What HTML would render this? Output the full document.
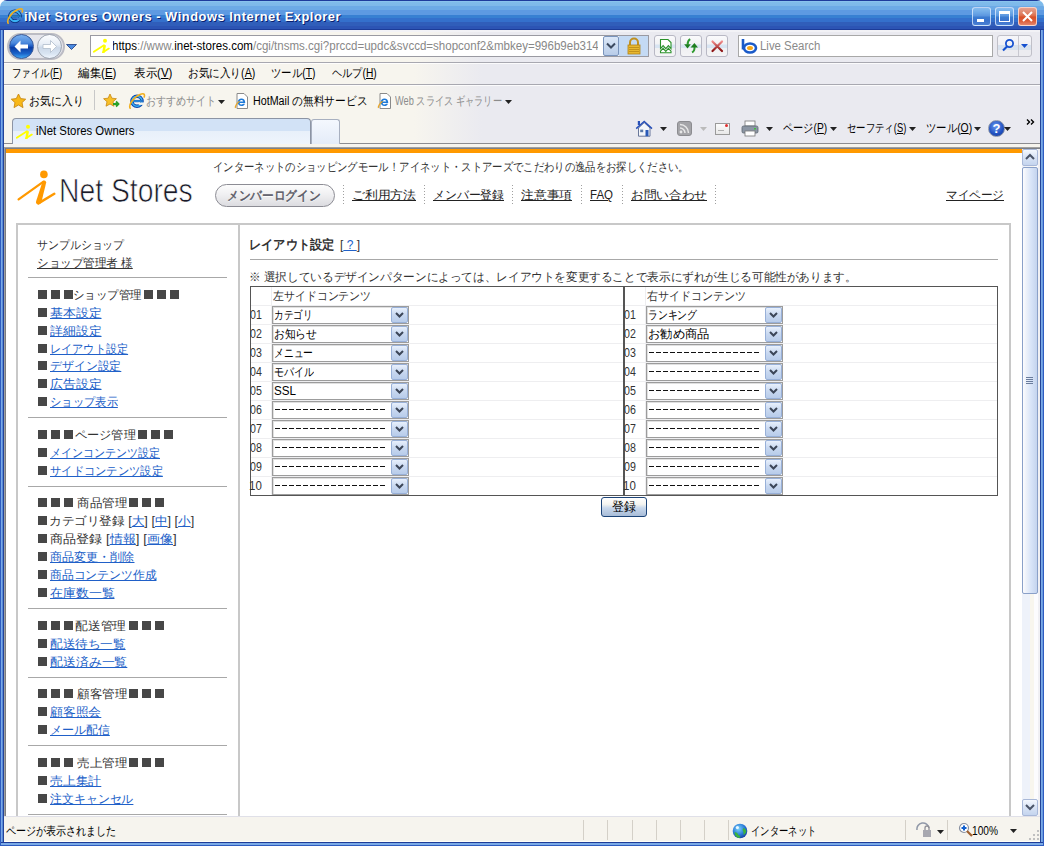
<!DOCTYPE html>
<html><head><meta charset="utf-8"><title>iNet Stores Owners</title>
<style>
*{margin:0;padding:0;box-sizing:border-box}
html,body{width:1044px;height:846px;overflow:hidden;background:#fff;font-family:"Liberation Sans",sans-serif;font-size:12px;color:#000}
.a{position:absolute}
.t{position:absolute;white-space:nowrap;line-height:14px;font-size:12px;transform-origin:0 0}
.u{text-decoration:underline}
</style></head><body>
<div class="a" style="left:0px;top:20px;width:1044px;height:826px;background:#2E5CC0;"></div>
<div class="a" style="left:1px;top:28px;width:3px;height:817px;background:linear-gradient(90deg,#7AAAE6 0,#7AAAE6 1px,#5888D8 1px,#5888D8 2px,#224498 2px);"></div>
<div class="a" style="left:1040px;top:28px;width:3px;height:817px;background:linear-gradient(90deg,#224498 0,#224498 1px,#7AAAE6 1px,#7AAAE6 2px,#6A9AE0 2px);"></div>
<div class="a" style="left:1px;top:842px;width:1042px;height:3px;background:linear-gradient(180deg,#1E3C98 0,#1E3C98 1px,#7AAAE6 1px);"></div>
<div class="a" style="left:0px;top:0px;width:1044px;height:30px;background:linear-gradient(180deg,#1E3C9C 0,#1E3C9C 1px,#92CAF2 1px,#80BCEA 2px,#7EB8EA 6px,#6CAAE6 6px,#6CAAE6 10px,#5E9AE2 10px,#5E9AE2 15px,#3880D2 15px,#3880D2 18px,#3470CC 18px,#3470CC 22px,#305EBA 22px,#305EBA 26px,#2C54B4 26px,#2C54B4 29px,#1C3C98 29px);border-radius:7px 7px 0 0"></div>
<svg class="a" style="left:6px;top:7px" width="18" height="18" viewBox="-1 -1 18 18">
 <circle cx="8" cy="8.2" r="5" fill="none" stroke="#082A74" stroke-width="3.6"/>
 <circle cx="8" cy="8.2" r="5" fill="none" stroke="#3AB2F4" stroke-width="2.2"/>
 <rect x="2.6" y="6.9" width="10.8" height="2.3" fill="#082A74"/><rect x="3.2" y="7.5" width="9.6" height="1.1" fill="#3AB2F4"/>
 <rect x="9.6" y="9.5" width="5.6" height="2.4" fill="#3A7CD0"/>
 <path d="M1.2 15.2C-.6 12.6 3.6 4.4 11 1.4c3.4-1.4 5.2-.6 4.2 2.6" fill="none" stroke="#F0B020" stroke-width="1.6" stroke-linecap="round"/>
</svg>
<div class="t f" id="t0" style="left:25.01px;top:11px;font-size:13px;color:#0A1E6E;font-weight:bold;letter-spacing:0.5px;--w:317.056px;transform:scaleX(0.99371);">iNet Stores Owners - Windows Internet Explorer</div>
<div class="t f" id="t1" style="left:24.01px;top:10px;font-size:13px;color:#fff;font-weight:bold;letter-spacing:0.5px;--w:317.056px;transform:scaleX(0.99371);">iNet Stores Owners - Windows Internet Explorer</div>
<div class="a" style="left:972px;top:7px;width:19px;height:19px;border:1px solid rgba(230,240,255,.75);border-radius:3px;background:linear-gradient(180deg,#86BCEE 0,#6AA6E6 30%,#5A94DE 48%,#3C7ED2 52%,#3A72CC 75%,#4A80D4 100%)"><div class="a" style="left:4px;top:11px;width:7px;height:3px;background:#fff"></div></div>
<div class="a" style="left:995px;top:7px;width:19px;height:19px;border:1px solid rgba(230,240,255,.75);border-radius:3px;background:linear-gradient(180deg,#86BCEE 0,#6AA6E6 30%,#5A94DE 48%,#3C7ED2 52%,#3A72CC 75%,#4A80D4 100%)"><div class="a" style="left:3px;top:3px;width:11px;height:11px;border:1px solid #fff;border-top-width:3px"></div></div>
<div class="a" style="left:1018px;top:7px;width:19px;height:19px;border:1px solid rgba(255,230,220,.8);border-radius:3px;background:linear-gradient(180deg,#E4A090 0,#E08468 30%,#DC6A48 48%,#D85028 52%,#DC5C38 75%,#E4846C 100%)"><svg class="a" style="left:2px;top:2px" width="13" height="13" viewBox="0 0 13 13"><path d="M2 2L11 11M11 2L2 11" stroke="#fff" stroke-width="2"/></svg></div>
<div class="a" style="left:4px;top:30px;width:1036px;height:117px;background:linear-gradient(90deg,#F7F5EE 0,#F7F5EE 410px,#EAEAF0 478px,#EAEAF0 100%);"></div>
<div class="a" style="left:4px;top:30px;width:1036px;height:2px;background:#F2F2F6;"></div>
<div class="a" style="left:7px;top:33px;width:58px;height:27px;border-radius:14px;background:#E6E6EC;border:2px solid #BCBCC4"></div>
<div class="a" style="left:9px;top:34px;width:25px;height:25px;border-radius:50%;background:linear-gradient(180deg,#7AB0EE 0,#4A88DC 35%,#1E5CC4 48%,#0A3CA4 55%,#1A62C8 80%,#40A8F4 100%);border:1px solid #3A5A98"></div>
<svg class="a" style="left:13px;top:39px" width="17" height="15" viewBox="0 0 17 15"><path d="M1.5 7.5L7.5 1.5v4H15v4H7.5v4z" fill="#fff"/></svg>
<div class="a" style="left:37px;top:34px;width:25px;height:25px;border-radius:50%;background:linear-gradient(180deg,#FCFDFF 0,#E8EEF6 40%,#CCD8E8 55%,#D8E4F2 80%,#F0F6FE 100%);border:1px solid #9CA4B0"></div>
<svg class="a" style="left:41px;top:39px" width="17" height="15" viewBox="0 0 17 15"><path d="M15.5 7.5L9.5 1.5v4H2v4h7.5v4z" fill="#fff" stroke="#B0BCCC" stroke-width=".8"/></svg>
<svg class="a" style="left:66px;top:44px" width="11" height="6" viewBox="0 0 11 6"><path d="M.5 .5h10L5.5 5.5z" fill="#4A8AE0" stroke="#1A3A80" stroke-width=".8"/></svg>
<div class="a" style="left:90px;top:35px;width:559px;height:22px;background:#fff;border:1px solid #9A9AA2"></div>
<svg class="a" style="left:93px;top:37px" width="18" height="16" viewBox="0 0 18 16"><circle cx="12" cy="3.7" r="2" fill="#FFFF00"/><path d="M0.8 14.8L11 8.2" stroke="#FFFF00" stroke-width="1.8" stroke-linecap="round"/><path d="M10.4 8.2h2.6L11.6 15.8H9.2z" fill="#FFFF00"/><path d="M10 15.3L15.8 11.6" stroke="#FFFF00" stroke-width="1.8" stroke-linecap="round"/></svg>
<div class="a" style="left:113px;top:36px;width:485px;height:20px;overflow:hidden">
<div class="t f" id="t2" style="left:-0.96px;top:3px;font-size:12px;color:#888;--w:492.546px;transform:scaleX(0.96086);"><span style="color:#000">https</span>://www.<span style="color:#000">inet-stores.com</span>/cgi/tnsms.cgi?prccd=updc&amp;svccd=shopconf2&amp;mbkey=996b9eb314c</div>
</div>
<div class="a" style="left:603px;top:36px;width:16px;height:20px;border:1px solid #7A94BC;border-radius:2px;background:linear-gradient(180deg,#DCE8F8,#B8CCE8)"></div>
<svg class="a" style="left:606px;top:42px" width="10" height="8" viewBox="0 0 10 8"><path d="M1 1.5L5 5.5 9 1.5" fill="none" stroke="#3C4A60" stroke-width="2"/></svg>
<div class="a" style="left:619px;top:36px;width:29px;height:20px;background:#C4DAF4;"></div>
<svg class="a" style="left:626px;top:37px" width="16" height="18" viewBox="0 0 16 18"><path d="M4 8V5.5a4 4 0 0 1 8 0V8" fill="none" stroke="#C09020" stroke-width="2"/><rect x="2" y="8" width="12" height="9" fill="#E8B830" stroke="#B08018" stroke-width=".8"/><path d="M3 10.5h10M3 12.5h10M3 14.5h10" stroke="#B88818" stroke-width=".8"/></svg>
<div class="a" style="left:654px;top:35px;width:22px;height:22px;border:1px solid #B8B8C4;border-radius:3px;background:linear-gradient(180deg,#FAFAFC 0,#F2F2F4 40%,#D8E4F2 45%,#D8E4F2 58%,#F0F0F2 62%,#F4F4F6 100%)"></div>
<div class="a" style="left:680px;top:35px;width:22px;height:22px;border:1px solid #B8B8C4;border-radius:3px;background:linear-gradient(180deg,#FAFAFC 0,#F2F2F4 40%,#D8E4F2 45%,#D8E4F2 58%,#F0F0F2 62%,#F4F4F6 100%)"></div>
<div class="a" style="left:706px;top:35px;width:22px;height:22px;border:1px solid #B8B8C4;border-radius:3px;background:linear-gradient(180deg,#FAFAFC 0,#F2F2F4 40%,#D8E4F2 45%,#D8E4F2 58%,#F0F0F2 62%,#F4F4F6 100%)"></div>
<svg class="a" style="left:652px;top:34px" width="78" height="24" viewBox="652 34 78 24"><path d="M660.5 39.5h7.5l3 3v6L668.4 45.6 665.8 48.6 663.1 45.6 660.5 48.5z" fill="#fff" stroke="#2A922A" stroke-width="1.1"/><path d="M660.5 51.2L663.1 48.3 665.8 51.3 668.4 48.3 671 51.2v1.6h-10.5z" fill="#fff" stroke="#2A922A" stroke-width="1.1"/><path d="M690.2 39.2c-1.6.8-2.6 2.4-2.6 5.6" fill="none" stroke="#2E9A2E" stroke-width="2"/><path d="M684.2 44.2h6.6l-3.3 4.2z" fill="#1E7E1E"/><path d="M692 52.4c1.8-.8 2.7-2.6 2.5-5.8" fill="none" stroke="#2E9A2E" stroke-width="2"/><path d="M690.6 47.4h7.4l-3.6-4.4z" fill="#1E7E1E"/><defs><linearGradient id="xg" x1="0" y1="0" x2="0" y2="1"><stop offset="0" stop-color="#F08A8A"/><stop offset="1" stop-color="#8A1010"/></linearGradient></defs><path d="M712.5 41.5l9.5 9.5M722 41.5l-9.5 9.5" stroke="url(#xg)" stroke-width="2.2" stroke-linecap="round"/></svg>
<div class="a" style="left:738px;top:35px;width:255px;height:22px;background:#fff;border:1px solid #A8A8A8"></div>
<svg class="a" style="left:741px;top:38px" width="17" height="16" viewBox="0 0 17 16"><path d="M2 1v10.5" stroke="#1A5AC8" stroke-width="2.6"/><ellipse cx="9" cy="10" rx="6" ry="4.5" fill="none" stroke="#1A5AC8" stroke-width="2.6"/><ellipse cx="9" cy="10" rx="3" ry="2" fill="#F8A818"/></svg>
<div class="t f" id="t3" style="left:760.05px;top:39px;font-size:12px;color:#8A8A8A;--w:60.308px;transform:scaleX(0.95161);">Live Search</div>
<div class="a" style="left:997px;top:35px;width:35px;height:22px;border:1px solid #C0C0C8;border-radius:3px;background:linear-gradient(180deg,#F6F6FA 0,#F0F0F4 45%,#D8E2EE 45%,#D8E2EE 70%,#ECECF0 70%)"></div>
<div class="a" style="left:1018px;top:36px;width:1px;height:20px;background:#C8C8D0;"></div>
<svg class="a" style="left:1001px;top:38px" width="14" height="15" viewBox="0 0 14 15"><circle cx="8.5" cy="5.5" r="3.6" fill="none" stroke="#1450D0" stroke-width="1.8"/><path d="M6 8.5L2 12.5" stroke="#1450D0" stroke-width="2.2"/></svg>
<svg class="a" style="left:1021px;top:44px" width="7" height="4" viewBox="0 0 7 4"><path d="M0 0h7L3.5 4z" fill="#1450D0"/></svg>
<div class="a" style="left:4px;top:62px;width:1036px;height:1px;background:#A8A8B0;"></div>
<div class="a" style="left:4px;top:63px;width:1036px;height:1px;background:rgba(255,255,255,.8);"></div>
<div class="t f" id="t4" style="left:12.21px;top:66px;font-size:12px;color:#000;--w:50.062px;transform:scaleX(0.79032);">ファイル(<span class="u">F</span>)</div>
<div class="t f" id="t5" style="left:78.00px;top:66px;font-size:12px;color:#000;--w:38.415px;transform:scaleX(0.96000);">編集(<span class="u">E</span>)</div>
<div class="t f" id="t6" style="left:134.00px;top:66px;font-size:12px;color:#000;--w:38.415px;transform:scaleX(0.96000);">表示(<span class="u">V</span>)</div>
<div class="t f" id="t7" style="left:188.11px;top:66px;font-size:12px;color:#000;--w:67.299px;transform:scaleX(0.88533);">お気に入り(<span class="u">A</span>)</div>
<div class="t f" id="t8" style="left:271.13px;top:66px;font-size:12px;color:#000;--w:44.464px;transform:scaleX(0.86600);">ツール(<span class="u">T</span>)</div>
<div class="t f" id="t9" style="left:332.00px;top:66px;font-size:12px;color:#000;--w:44.771px;transform:scaleX(0.85000);">ヘルプ(<span class="u">H</span>)</div>
<div class="a" style="left:4px;top:84px;width:1036px;height:1px;background:#A8A8B0;"></div>
<div class="a" style="left:4px;top:85px;width:1036px;height:1px;background:rgba(255,255,255,.8);"></div>
<svg class="a" style="left:10px;top:93px" width="17" height="16" viewBox="0 0 17 16"><path d="M8.5 1l2.2 4.6 5 .6-3.7 3.4 1 5L8.5 12 4 14.6l1-5L1.3 6.2l5-.6z" fill="#F8B818" stroke="#C88810" stroke-width=".9"/></svg>
<div class="t f" id="t10" style="left:29.09px;top:94px;font-size:12px;color:#000;--w:54.643px;transform:scaleX(0.91071);">お気に入り</div>
<div class="a" style="left:94px;top:90px;width:1px;height:20px;background:#C8C8C8;"></div>
<svg class="a" style="left:103px;top:93px" width="18" height="16" viewBox="0 0 18 16"><path d="M7 1l1.9 4.2 4.5.5-3.4 3 1 4.5L7 11 3 13.2l1-4.5-3.4-3 4.5-.5z" fill="#F8C028" stroke="#C88810" stroke-width=".8"/><path d="M10 11h5M13 8.5l2.5 2.5L13 13.5" fill="none" stroke="#2AA02A" stroke-width="1.8"/></svg>
<svg class="a" style="left:128px;top:92px" width="18" height="18" viewBox="-1 -1 18 18">
 <circle cx="8" cy="8.2" r="5" fill="none" stroke="#0E46AC" stroke-width="3.6"/>
 <circle cx="8" cy="8.2" r="5" fill="none" stroke="#3AB2F4" stroke-width="1.6"/>
 <rect x="2.6" y="6.9" width="10.8" height="2.3" fill="#0E46AC"/><rect x="3.2" y="7.5" width="9.6" height="1.1" fill="#3AB2F4"/>
 <rect x="9.6" y="9.5" width="5.6" height="2.4" fill="#F7F5EE"/>
 <path d="M1.2 15.2C-.6 12.6 3.6 4.4 11 1.4c3.4-1.4 5.2-.6 4.2 2.6" fill="none" stroke="#F0B020" stroke-width="1.6" stroke-linecap="round"/>
</svg>
<div class="t f" id="t11" style="left:146.16px;top:94px;font-size:12px;color:#8C8C8C;--w:70.350px;transform:scaleX(0.83750);">おすすめサイト</div>
<svg class="a" style="left:218px;top:100px" width="7" height="4" viewBox="0 0 7 4"><path d="M0 0h7L3.5 4z" fill="#222"/></svg>
<svg class="a" style="left:233px;top:92px" width="17" height="18" viewBox="0 0 17 18"><path d="M4 1.5h7l3.5 3.5v11.5H4z" fill="#fff" stroke="#8A8A8A"/><path d="M8.5 6.5c-2.2 0-3.8 1.7-3.8 3.8s1.6 3.8 3.8 3.8c1.6 0 2.9-.9 3.5-2.3h-2c-.3.5-.8.7-1.4.7-1 0-1.8-.6-1.9-1.6h5.5v-.6c0-2.1-1.6-3.8-3.7-3.8zM6.7 9.6c.2-.9.9-1.5 1.8-1.5s1.6.6 1.8 1.5z" fill="#1E7AD8"/><path d="M2.5 16c-.8-1.2.9-4.3 4-6.7" fill="none" stroke="#E8A628" stroke-width="1.2"/></svg>
<div class="t f" id="t12" style="left:253.11px;top:94px;font-size:12px;color:#000;--w:114.300px;transform:scaleX(0.89286);">HotMail の無料サービス</div>
<svg class="a" style="left:376px;top:92px" width="17" height="18" viewBox="0 0 17 18"><path d="M4 1.5h7l3.5 3.5v11.5H4z" fill="#fff" stroke="#8A8A8A"/><path d="M8.5 6.5c-2.2 0-3.8 1.7-3.8 3.8s1.6 3.8 3.8 3.8c1.6 0 2.9-.9 3.5-2.3h-2c-.3.5-.8.7-1.4.7-1 0-1.8-.6-1.9-1.6h5.5v-.6c0-2.1-1.6-3.8-3.7-3.8zM6.7 9.6c.2-.9.9-1.5 1.8-1.5s1.6.6 1.8 1.5z" fill="#1E7AD8"/><path d="M2.5 16c-.8-1.2.9-4.3 4-6.7" fill="none" stroke="#E8A628" stroke-width="1.2"/></svg>
<div class="t f" id="t13" style="left:395.00px;top:94px;font-size:12px;color:#8C8C8C;--w:106.864px;transform:scaleX(0.76812);">Web スライス ギャラリー</div>
<svg class="a" style="left:505px;top:100px" width="7" height="4" viewBox="0 0 7 4"><path d="M0 0h7L3.5 4z" fill="#222"/></svg>
<div class="a" style="left:4px;top:143px;width:1036px;height:1px;background:#8C8C90;"></div>
<div class="a" style="left:12px;top:118px;width:299px;height:26px;border:1px solid #8C94A4;border-bottom:none;border-radius:4px 4px 0 0;background:linear-gradient(180deg,#D2E2F6 0,#D2E2F6 50%,#E8F0FA 50%,#EEF4FC)"></div>
<svg class="a" style="left:16px;top:123px" width="18" height="16" viewBox="0 0 18 16"><circle cx="12" cy="3.7" r="2" fill="#FFFF00"/><path d="M0.8 14.8L11 8.2" stroke="#FFFF00" stroke-width="1.8" stroke-linecap="round"/><path d="M10.4 8.2h2.6L11.6 15.8H9.2z" fill="#FFFF00"/><path d="M10 15.3L15.8 11.6" stroke="#FFFF00" stroke-width="1.8" stroke-linecap="round"/></svg>
<div class="t f" id="t14" style="left:36.00px;top:124px;font-size:12px;color:#000;--w:98.544px;transform:scaleX(0.94712);">iNet Stores Owners</div>
<div class="a" style="left:311px;top:119px;width:29px;height:25px;border:1px solid #A8B0C0;border-bottom:none;border-radius:3px 3px 0 0;background:linear-gradient(180deg,#F4F8FE,#E4ECF8)"></div>
<svg class="a" style="left:635px;top:120px" width="18" height="17" viewBox="0 0 18 17"><path d="M3.5 8v8.2h11.5V8L9.2 2.6z" fill="#F4F6FA" stroke="#5A6A90" stroke-width=".9"/><path d="M1.2 8.6L9.2 1.4l7.8 7.2" fill="none" stroke="#2850B8" stroke-width="1.5"/><rect x="2.8" y="1" width="2.2" height="4" fill="#2850B8"/><rect x="10.5" y="10" width="3" height="6.2" fill="#2A5AB8"/><rect x="5.2" y="9.6" width="3" height="2.6" fill="#5A78A8"/></svg>
<svg class="a" style="left:660px;top:127px" width="7" height="4" viewBox="0 0 7 4"><path d="M0 0h7L3.5 4z" fill="#222"/></svg>
<div class="a" style="left:677px;top:121px;width:15px;height:15px;background:#A4A4A8;border-radius:3px;border:1px solid #8C8C90"></div>
<svg class="a" style="left:679px;top:123px" width="11" height="11" viewBox="0 0 11 11"><circle cx="2" cy="9" r="1.4" fill="#E8E8E8"/><path d="M1 5a5 5 0 0 1 5 5M1 1.5a8.5 8.5 0 0 1 8.5 8.5" fill="none" stroke="#E8E8E8" stroke-width="1.5"/></svg>
<svg class="a" style="left:700px;top:127px" width="7" height="4" viewBox="0 0 7 4"><path d="M0 0h7L3.5 4z" fill="#BBB"/></svg>
<div class="a" style="left:715px;top:123px;width:15px;height:12px;background:linear-gradient(180deg,#FCFCFC,#E8E8E8);border:1px solid #9A9A9A"></div>
<div class="a" style="left:718px;top:130px;width:6px;height:1px;background:#B0B0B0;"></div>
<div class="a" style="left:725px;top:124px;width:3px;height:3px;background:#E03030;border-radius:50%"></div>
<svg class="a" style="left:741px;top:120px" width="18" height="17" viewBox="0 0 18 17"><rect x="4" y="1" width="10" height="5" fill="#fff" stroke="#777" stroke-width=".8"/><rect x="1" y="6" width="16" height="7" rx="1.5" fill="#8C96A4" stroke="#5C6470" stroke-width=".8"/><rect x="4" y="11" width="10" height="5" fill="#fff" stroke="#777" stroke-width=".8"/><rect x="13" y="8" width="2" height="1.5" fill="#40C040"/></svg>
<svg class="a" style="left:766px;top:127px" width="7" height="4" viewBox="0 0 7 4"><path d="M0 0h7L3.5 4z" fill="#222"/></svg>
<div class="t f" id="t15" style="left:783.00px;top:121px;font-size:12px;color:#000;--w:44.213px;transform:scaleX(0.85000);">ページ(<span class="u">P</span>)</div>
<svg class="a" style="left:830px;top:127px" width="7" height="4" viewBox="0 0 7 4"><path d="M0 0h7L3.5 4z" fill="#222"/></svg>
<div class="t f" id="t16" style="left:847.22px;top:121px;font-size:12px;color:#000;--w:59.292px;transform:scaleX(0.78000);">セーフティ(<span class="u">S</span>)</div>
<svg class="a" style="left:909px;top:127px" width="7" height="4" viewBox="0 0 7 4"><path d="M0 0h7L3.5 4z" fill="#222"/></svg>
<div class="t f" id="t17" style="left:926.13px;top:121px;font-size:12px;color:#000;--w:46.163px;transform:scaleX(0.86538);">ツール(<span class="u">O</span>)</div>
<svg class="a" style="left:974px;top:127px" width="7" height="4" viewBox="0 0 7 4"><path d="M0 0h7L3.5 4z" fill="#222"/></svg>
<div class="a" style="left:988px;top:120px;width:17px;height:17px;border-radius:50%;background:radial-gradient(circle at 45% 35%,#6A9AF0 0,#2050C0 60%,#183A90);border:1px solid #8A94A8"></div>
<div class="a" style="left:988px;top:121px;width:17px;text-align:center;color:#fff;font-weight:bold;font-size:13px;line-height:15px">?</div>
<svg class="a" style="left:1004px;top:127px" width="7" height="4" viewBox="0 0 7 4"><path d="M0 0h7L3.5 4z" fill="#222"/></svg>
<svg class="a" style="left:1026px;top:119px" width="9" height="6" viewBox="0 0 9 6"><path d="M1 .5L3.5 3 1 5.5M5 .5L7.5 3 5 5.5" fill="none" stroke="#000" stroke-width="1.4"/></svg>
<div class="a" style="left:4px;top:144px;width:1036px;height:3px;background:#F6F4EE;"></div>
<div class="a" style="left:4px;top:147px;width:1036px;height:1px;background:#A0A0A0;"></div>
<div class="a" style="left:4px;top:147px;width:1px;height:669px;background:#A0A0A0;"></div>
<div class="a" style="left:5px;top:148px;width:1035px;height:1px;background:#7C8088;"></div>
<div class="a" style="left:5px;top:148px;width:1px;height:668px;background:#7C7C80;"></div>
<div class="a" style="left:4px;top:816px;width:1036px;height:26px;background:#F6F4EE;"></div>
<div class="a" style="left:4px;top:816px;width:1036px;height:1px;background:#E0E0E8;"></div>
<div class="a" style="left:4px;top:841px;width:1036px;height:1px;background:#FFFFF8;"></div>
<div class="t f" id="t18" style="left:6.00px;top:824px;font-size:12px;color:#000;--w:110.235px;transform:scaleX(0.83511);">ページが表示されました</div>
<div class="a" style="left:6px;top:149px;width:1034px;height:667px;background:#fff;"></div>
<div class="a" style="left:6px;top:149px;width:1016px;height:4px;background:#FF9900;"></div>
<div class="a" style="left:1022px;top:149px;width:18px;height:667px;background:linear-gradient(90deg,#EEF2FA 0,#EEF2FA 8px,#F8F6EE 8px,#F8F6EE 12px,#FCFCFE 12px);"></div>
<div class="a" style="left:1038px;top:149px;width:2px;height:667px;background:#F0F0F4;"></div>
<div class="a" style="left:1022px;top:149px;width:16px;height:17px;border:1px solid #A8B8D8;border-radius:2px;background:linear-gradient(180deg,#F4F8FE 0,#DCE6F6 40%,#C4D4EE 100%)"></div>
<svg class="a" style="left:1025px;top:153px" width="10" height="7" viewBox="0 0 10 7"><path d="M1 6L5 2l4 4" fill="none" stroke="#4A5468" stroke-width="2"/></svg>
<div class="a" style="left:1022px;top:167px;width:16px;height:427px;border:1px solid #8AA0C8;border-radius:2px;background:linear-gradient(90deg,#FCFCFE 0,#EEF2FA 3px,#D8E4F8 8px,#C4D4EE 14px)"></div>
<div class="a" style="left:1026px;top:377px;width:7px;height:7px;background:repeating-linear-gradient(180deg,#6A7C9C 0,#6A7C9C 1px,transparent 1px,transparent 2px);"></div>
<div class="a" style="left:1022px;top:799px;width:16px;height:17px;border:1px solid #A8B8D8;border-radius:2px;background:linear-gradient(180deg,#F4F8FE 0,#DCE6F6 40%,#C4D4EE 100%)"></div>
<svg class="a" style="left:1025px;top:804px" width="10" height="7" viewBox="0 0 10 7"><path d="M1 1l4 4 4-4" fill="none" stroke="#4A5468" stroke-width="2"/></svg>
<div class="t f" id="t19" style="left:213.14px;top:160px;font-size:12px;color:#333;--w:475.757px;transform:scaleX(0.86188);">インターネットのショッピングモール！アイネット・ストアーズでこだわりの逸品をお探しください。</div>
<svg class="a" style="left:14px;top:166px" width="48" height="44" viewBox="0 0 48 44"><circle cx="29.9" cy="8.4" r="3.8" fill="#FF9900"/><path d="M4.6 33.4L29.5 15.6" stroke="#FF9900" stroke-width="2.3" stroke-linecap="round"/><path d="M28.6 15.2Q31.6 13.4 32.2 16.4L27.4 36.2Q26.4 38.8 23.4 38.2Q21.4 37.6 22.2 35Z" fill="#FF9900"/><path d="M24.4 37.4L40.3 27.8" stroke="#FF9900" stroke-width="2.5" stroke-linecap="round"/></svg>
<div class="t f" id="t20" style="left:59.03px;top:173px;font-size:33px;color:#1A1A28;line-height:36px;-webkit-text-stroke:0.7px #fff;--w:133.751px;transform:scaleX(0.85789);">Net Stores</div>
<div class="a" style="left:215px;top:184px;width:120px;height:23px;border:1px solid #8C8C94;border-radius:12px;background:linear-gradient(180deg,#FCFCFC 0,#F0F0F2 45%,#DCDCE0 100%)"></div>
<div class="t f" id="t21" style="left:227.10px;top:189px;font-size:13px;color:#5A5A66;-webkit-text-stroke-width:0.5px;text-shadow:0 1px 0 #fff;--w:93.499px;transform:scaleX(0.89903);">メンバーログイン</div>
<div class="a" style="left:343px;top:185px;width:1px;height:21px;background:repeating-linear-gradient(180deg,#A0A0A0 0,#A0A0A0 1px,transparent 1px,transparent 3px);"></div>
<div class="a" style="left:424px;top:185px;width:1px;height:21px;background:repeating-linear-gradient(180deg,#A0A0A0 0,#A0A0A0 1px,transparent 1px,transparent 3px);"></div>
<div class="a" style="left:512px;top:185px;width:1px;height:21px;background:repeating-linear-gradient(180deg,#A0A0A0 0,#A0A0A0 1px,transparent 1px,transparent 3px);"></div>
<div class="a" style="left:581px;top:185px;width:1px;height:21px;background:repeating-linear-gradient(180deg,#A0A0A0 0,#A0A0A0 1px,transparent 1px,transparent 3px);"></div>
<div class="a" style="left:622px;top:185px;width:1px;height:21px;background:repeating-linear-gradient(180deg,#A0A0A0 0,#A0A0A0 1px,transparent 1px,transparent 3px);"></div>
<div class="a" style="left:715px;top:185px;width:1px;height:21px;background:repeating-linear-gradient(180deg,#A0A0A0 0,#A0A0A0 1px,transparent 1px,transparent 3px);"></div>
<div class="t f u" id="t22" style="left:352.00px;top:188px;font-size:12px;color:#222;--w:64.000px;transform:scaleX(1.06667);">ご利用方法</div>
<div class="t f u" id="t23" style="left:433.00px;top:188px;font-size:12px;color:#222;--w:71.000px;transform:scaleX(0.98611);">メンバー登録</div>
<div class="t f u" id="t24" style="left:521.00px;top:188px;font-size:12px;color:#222;--w:51.000px;transform:scaleX(1.06250);">注意事項</div>
<div class="t f u" id="t25" style="left:590.00px;top:188px;font-size:12px;color:#222;--w:23.015px;transform:scaleX(0.95833);">FAQ</div>
<div class="t f u" id="t26" style="left:631.00px;top:188px;font-size:12px;color:#222;--w:76.000px;transform:scaleX(1.05556);">お問い合わせ</div>
<div class="t f u" id="t27" style="left:946.00px;top:188px;font-size:12px;color:#222;--w:58.000px;transform:scaleX(0.96667);">マイページ</div>
<div class="a" style="left:16px;top:223px;width:995px;height:2px;background:#C8C8C8;"></div>
<div class="a" style="left:16px;top:223px;width:2px;height:593px;background:#C8C8C8;"></div>
<div class="a" style="left:238px;top:223px;width:2px;height:593px;background:#C8C8C8;"></div>
<div class="a" style="left:1009px;top:223px;width:2px;height:593px;background:#C8C8C8;"></div>
<div class="t f" id="t28" style="left:37.00px;top:238px;font-size:12px;color:#333;--w:87.300px;transform:scaleX(0.90937);">サンプルショップ</div>
<div class="t f u" id="t29" style="left:37.00px;top:256px;font-size:12px;color:#333;--w:95.767px;transform:scaleX(0.96400);">ショップ管理者 様</div>
<div class="a" style="left:28px;top:277px;width:199px;height:1px;background:#A8A8A8;"></div>
<div class="a" style="left:28px;top:417px;width:199px;height:1px;background:#A8A8A8;"></div>
<div class="a" style="left:28px;top:486px;width:199px;height:1px;background:#A8A8A8;"></div>
<div class="a" style="left:28px;top:608px;width:199px;height:1px;background:#A8A8A8;"></div>
<div class="a" style="left:28px;top:677px;width:199px;height:1px;background:#A8A8A8;"></div>
<div class="a" style="left:28px;top:745px;width:199px;height:1px;background:#A8A8A8;"></div>
<div class="a" style="left:28px;top:814px;width:199px;height:1px;background:#A8A8A8;"></div>
<div class="a" style="left:38px;top:290px;width:9px;height:9px;background:#474747;"></div>
<div class="a" style="left:51px;top:290px;width:9px;height:9px;background:#474747;"></div>
<div class="a" style="left:64px;top:290px;width:9px;height:9px;background:#474747;"></div>
<div class="t f" id="t30" style="left:73.09px;top:288px;font-size:12px;color:#333;--w:68.914px;transform:scaleX(0.95714);">ショップ管理</div>
<div class="a" style="left:144px;top:290px;width:9px;height:9px;background:#474747;"></div>
<div class="a" style="left:157px;top:290px;width:9px;height:9px;background:#474747;"></div>
<div class="a" style="left:170px;top:290px;width:9px;height:9px;background:#474747;"></div>
<div class="a" style="left:38px;top:308px;width:9px;height:9px;background:#474747;"></div>
<div class="t f u" id="t31" style="left:50.00px;top:306px;font-size:12px;color:#2060C8;--w:51.500px;transform:scaleX(1.07292);">基本設定</div>
<div class="a" style="left:38px;top:326px;width:9px;height:9px;background:#474747;"></div>
<div class="t f u" id="t32" style="left:50.00px;top:324px;font-size:12px;color:#2060C8;--w:51.500px;transform:scaleX(1.07292);">詳細設定</div>
<div class="a" style="left:38px;top:344px;width:9px;height:9px;background:#474747;"></div>
<div class="t f u" id="t33" style="left:50.00px;top:342px;font-size:12px;color:#2060C8;--w:78.100px;transform:scaleX(0.92976);">レイアウト設定</div>
<div class="a" style="left:38px;top:361px;width:9px;height:9px;background:#474747;"></div>
<div class="t f u" id="t34" style="left:50.00px;top:359px;font-size:12px;color:#2060C8;--w:71.300px;transform:scaleX(0.99028);">デザイン設定</div>
<div class="a" style="left:38px;top:379px;width:9px;height:9px;background:#474747;"></div>
<div class="t f u" id="t35" style="left:50.00px;top:377px;font-size:12px;color:#2060C8;--w:51.500px;transform:scaleX(1.07292);">広告設定</div>
<div class="a" style="left:38px;top:397px;width:9px;height:9px;background:#474747;"></div>
<div class="t f u" id="t36" style="left:50.00px;top:395px;font-size:12px;color:#2060C8;--w:67.800px;transform:scaleX(0.94167);">ショップ表示</div>
<div class="a" style="left:38px;top:430px;width:9px;height:9px;background:#474747;"></div>
<div class="a" style="left:51px;top:430px;width:9px;height:9px;background:#474747;"></div>
<div class="a" style="left:64px;top:430px;width:9px;height:9px;background:#474747;"></div>
<div class="t f" id="t37" style="left:75.00px;top:428px;font-size:12px;color:#333;--w:60.700px;transform:scaleX(1.01167);">ページ管理</div>
<div class="a" style="left:138px;top:430px;width:9px;height:9px;background:#474747;"></div>
<div class="a" style="left:151px;top:430px;width:9px;height:9px;background:#474747;"></div>
<div class="a" style="left:164px;top:430px;width:9px;height:9px;background:#474747;"></div>
<div class="a" style="left:38px;top:448px;width:9px;height:9px;background:#474747;"></div>
<div class="t f u" id="t38" style="left:50.00px;top:446px;font-size:12px;color:#2060C8;--w:110.000px;transform:scaleX(0.91667);">メインコンテンツ設定</div>
<div class="a" style="left:38px;top:466px;width:9px;height:9px;background:#474747;"></div>
<div class="t f u" id="t39" style="left:50.00px;top:464px;font-size:12px;color:#2060C8;--w:112.800px;transform:scaleX(0.94000);">サイドコンテンツ設定</div>
<div class="a" style="left:38px;top:498px;width:9px;height:9px;background:#474747;"></div>
<div class="a" style="left:51px;top:498px;width:9px;height:9px;background:#474747;"></div>
<div class="a" style="left:64px;top:498px;width:9px;height:9px;background:#474747;"></div>
<div class="t f" id="t40" style="left:76.50px;top:496px;font-size:12px;color:#333;--w:50.000px;transform:scaleX(1.04167);">商品管理</div>
<div class="a" style="left:129px;top:498px;width:9px;height:9px;background:#474747;"></div>
<div class="a" style="left:142px;top:498px;width:9px;height:9px;background:#474747;"></div>
<div class="a" style="left:155px;top:498px;width:9px;height:9px;background:#474747;"></div>
<div class="a" style="left:38px;top:516px;width:9px;height:9px;background:#474747;"></div>
<div class="t f" id="t41" style="left:48.95px;top:514px;font-size:12px;color:#333;--w:145.201px;transform:scaleX(1.05182);">カテゴリ登録 [<span class="u" style="color:#2060C8">大</span>] [<span class="u" style="color:#2060C8">中</span>] [<span class="u" style="color:#2060C8">小</span>]</div>
<div class="a" style="left:38px;top:534px;width:9px;height:9px;background:#474747;"></div>
<div class="t f" id="t42" style="left:50.00px;top:532px;font-size:12px;color:#333;--w:126.634px;transform:scaleX(1.09138);">商品登録 [<span class="u" style="color:#2060C8">情報</span>] [<span class="u" style="color:#2060C8">画像</span>]</div>
<div class="a" style="left:38px;top:552px;width:9px;height:9px;background:#474747;"></div>
<div class="t f u" id="t43" style="left:50.00px;top:550px;font-size:12px;color:#2060C8;--w:84.500px;transform:scaleX(1.00595);">商品変更・削除</div>
<div class="a" style="left:38px;top:570px;width:9px;height:9px;background:#474747;"></div>
<div class="t f u" id="t44" style="left:50.00px;top:568px;font-size:12px;color:#2060C8;--w:106.400px;transform:scaleX(0.98519);">商品コンテンツ作成</div>
<div class="a" style="left:38px;top:588px;width:9px;height:9px;background:#474747;"></div>
<div class="t f u" id="t45" style="left:50.00px;top:586px;font-size:12px;color:#2060C8;--w:64.500px;transform:scaleX(1.07500);">在庫数一覧</div>
<div class="a" style="left:38px;top:621px;width:9px;height:9px;background:#474747;"></div>
<div class="a" style="left:51px;top:621px;width:9px;height:9px;background:#474747;"></div>
<div class="a" style="left:64px;top:621px;width:9px;height:9px;background:#474747;"></div>
<div class="t f" id="t46" style="left:75.44px;top:619px;font-size:12px;color:#333;--w:51.064px;transform:scaleX(1.06383);">配送管理</div>
<div class="a" style="left:129px;top:621px;width:9px;height:9px;background:#474747;"></div>
<div class="a" style="left:142px;top:621px;width:9px;height:9px;background:#474747;"></div>
<div class="a" style="left:155px;top:621px;width:9px;height:9px;background:#474747;"></div>
<div class="a" style="left:38px;top:639px;width:9px;height:9px;background:#474747;"></div>
<div class="t f u" id="t47" style="left:50.00px;top:637px;font-size:12px;color:#2060C8;--w:75.600px;transform:scaleX(1.05000);">配送待ち一覧</div>
<div class="a" style="left:38px;top:657px;width:9px;height:9px;background:#474747;"></div>
<div class="t f u" id="t48" style="left:50.00px;top:655px;font-size:12px;color:#2060C8;--w:77.300px;transform:scaleX(1.07361);">配送済み一覧</div>
<div class="a" style="left:38px;top:689px;width:9px;height:9px;background:#474747;"></div>
<div class="a" style="left:51px;top:689px;width:9px;height:9px;background:#474747;"></div>
<div class="a" style="left:64px;top:689px;width:9px;height:9px;background:#474747;"></div>
<div class="t f" id="t49" style="left:76.50px;top:687px;font-size:12px;color:#333;--w:50.000px;transform:scaleX(1.04167);">顧客管理</div>
<div class="a" style="left:129px;top:689px;width:9px;height:9px;background:#474747;"></div>
<div class="a" style="left:142px;top:689px;width:9px;height:9px;background:#474747;"></div>
<div class="a" style="left:155px;top:689px;width:9px;height:9px;background:#474747;"></div>
<div class="a" style="left:38px;top:707px;width:9px;height:9px;background:#474747;"></div>
<div class="t f u" id="t50" style="left:50.00px;top:705px;font-size:12px;color:#2060C8;--w:51.300px;transform:scaleX(1.06875);">顧客照会</div>
<div class="a" style="left:38px;top:725px;width:9px;height:9px;background:#474747;"></div>
<div class="t f u" id="t51" style="left:50.00px;top:723px;font-size:12px;color:#2060C8;--w:59.800px;transform:scaleX(0.99667);">メール配信</div>
<div class="a" style="left:38px;top:758px;width:9px;height:9px;background:#474747;"></div>
<div class="a" style="left:51px;top:758px;width:9px;height:9px;background:#474747;"></div>
<div class="a" style="left:64px;top:758px;width:9px;height:9px;background:#474747;"></div>
<div class="t f" id="t52" style="left:76.50px;top:756px;font-size:12px;color:#333;--w:50.000px;transform:scaleX(1.04167);">売上管理</div>
<div class="a" style="left:129px;top:758px;width:9px;height:9px;background:#474747;"></div>
<div class="a" style="left:142px;top:758px;width:9px;height:9px;background:#474747;"></div>
<div class="a" style="left:155px;top:758px;width:9px;height:9px;background:#474747;"></div>
<div class="a" style="left:38px;top:776px;width:9px;height:9px;background:#474747;"></div>
<div class="t f u" id="t53" style="left:50.00px;top:774px;font-size:12px;color:#2060C8;--w:51.300px;transform:scaleX(1.06875);">売上集計</div>
<div class="a" style="left:38px;top:794px;width:9px;height:9px;background:#474747;"></div>
<div class="t f u" id="t54" style="left:50.00px;top:792px;font-size:12px;color:#2060C8;--w:83.400px;transform:scaleX(0.99286);">注文キャンセル</div>
<div class="t f" id="t55" style="left:249.06px;top:238px;font-size:13px;color:#333;font-weight:bold;-webkit-text-stroke-width:0;--w:85.641px;transform:scaleX(0.94111);">レイアウト設定</div>
<div class="t f" id="t56" style="left:340.00px;top:238px;font-size:12px;color:#333;--w:20.031px;transform:scaleX(1.00000);">[<span class="u" style="color:#2060C8">&nbsp;?&nbsp;</span>]</div>
<div class="a" style="left:250px;top:259px;width:748px;height:1px;background:#A8A8A8;"></div>
<div class="t f" id="t57" style="left:249.03px;top:270px;font-size:12px;color:#333;--w:607.549px;transform:scaleX(0.96845);">※ 選択しているデザインパターンによっては、レイアウトを変更することで表示にずれが生じる可能性があります。</div>
<div class="a" style="left:250px;top:286px;width:374px;height:210px;background:transparent;border:1px solid #555"></div>
<div class="a" style="left:271px;top:287px;width:1px;height:208px;background:#EEEEF0;"></div>
<div class="t f" id="t58" style="left:273.00px;top:289px;font-size:12px;color:#333;--w:98.209px;transform:scaleX(0.90935);">左サイドコンテンツ</div>
<div class="a" style="left:251px;top:305px;width:372px;height:1px;background:#EEEEF0;"></div>
<div class="t f" id="t59" style="left:250.00px;top:308px;font-size:12px;color:#333;--w:11.818px;transform:scaleX(0.88462);">01</div>
<div class="a" style="left:272px;top:306px;width:137px;height:18px;background:#fff;border:1px solid #9C9C9C;box-shadow:inset 1px 1px 0 #E0E0E0"></div>
<div class="t f" id="t60" style="left:274.20px;top:308px;font-size:12px;color:#000;--w:38.400px;transform:scaleX(0.80000);">カテゴリ</div>
<div class="a" style="left:391px;top:307px;width:17px;height:16px;border:1px solid #98B0D8;border-radius:2px;background:linear-gradient(180deg,#E8F0FC 0,#C8D8F0 50%,#B8CCEA 100%)"></div>
<svg class="a" style="left:395px;top:312px" width="9" height="6" viewBox="0 0 9 6"><path d="M1 1l3.5 3.5L8 1" fill="none" stroke="#3C4658" stroke-width="2"/></svg>
<div class="a" style="left:251px;top:324px;width:372px;height:1px;background:#EEEEF0;"></div>
<div class="t f" id="t61" style="left:250.00px;top:327px;font-size:12px;color:#333;--w:11.818px;transform:scaleX(0.88462);">02</div>
<div class="a" style="left:272px;top:325px;width:137px;height:18px;background:#fff;border:1px solid #9C9C9C;box-shadow:inset 1px 1px 0 #E0E0E0"></div>
<div class="t f" id="t62" style="left:274.10px;top:327px;font-size:12px;color:#000;--w:42.996px;transform:scaleX(0.89574);">お知らせ</div>
<div class="a" style="left:391px;top:326px;width:17px;height:16px;border:1px solid #98B0D8;border-radius:2px;background:linear-gradient(180deg,#E8F0FC 0,#C8D8F0 50%,#B8CCEA 100%)"></div>
<svg class="a" style="left:395px;top:331px" width="9" height="6" viewBox="0 0 9 6"><path d="M1 1l3.5 3.5L8 1" fill="none" stroke="#3C4658" stroke-width="2"/></svg>
<div class="a" style="left:251px;top:343px;width:372px;height:1px;background:#EEEEF0;"></div>
<div class="t f" id="t63" style="left:250.00px;top:346px;font-size:12px;color:#333;--w:11.818px;transform:scaleX(0.88462);">03</div>
<div class="a" style="left:272px;top:344px;width:137px;height:18px;background:#fff;border:1px solid #9C9C9C;box-shadow:inset 1px 1px 0 #E0E0E0"></div>
<div class="t f" id="t64" style="left:274.18px;top:346px;font-size:12px;color:#000;--w:39.130px;transform:scaleX(0.81522);">メニュー</div>
<div class="a" style="left:391px;top:345px;width:17px;height:16px;border:1px solid #98B0D8;border-radius:2px;background:linear-gradient(180deg,#E8F0FC 0,#C8D8F0 50%,#B8CCEA 100%)"></div>
<svg class="a" style="left:395px;top:350px" width="9" height="6" viewBox="0 0 9 6"><path d="M1 1l3.5 3.5L8 1" fill="none" stroke="#3C4658" stroke-width="2"/></svg>
<div class="a" style="left:251px;top:362px;width:372px;height:1px;background:#EEEEF0;"></div>
<div class="t f" id="t65" style="left:250.00px;top:365px;font-size:12px;color:#333;--w:11.818px;transform:scaleX(0.88462);">04</div>
<div class="a" style="left:272px;top:363px;width:137px;height:18px;background:#fff;border:1px solid #9C9C9C;box-shadow:inset 1px 1px 0 #E0E0E0"></div>
<div class="t f" id="t66" style="left:274.17px;top:365px;font-size:12px;color:#000;--w:39.932px;transform:scaleX(0.83191);">モバイル</div>
<div class="a" style="left:391px;top:364px;width:17px;height:16px;border:1px solid #98B0D8;border-radius:2px;background:linear-gradient(180deg,#E8F0FC 0,#C8D8F0 50%,#B8CCEA 100%)"></div>
<svg class="a" style="left:395px;top:369px" width="9" height="6" viewBox="0 0 9 6"><path d="M1 1l3.5 3.5L8 1" fill="none" stroke="#3C4658" stroke-width="2"/></svg>
<div class="a" style="left:251px;top:381px;width:372px;height:1px;background:#EEEEF0;"></div>
<div class="t f" id="t67" style="left:250.00px;top:384px;font-size:12px;color:#333;--w:11.818px;transform:scaleX(0.88462);">05</div>
<div class="a" style="left:272px;top:382px;width:137px;height:18px;background:#fff;border:1px solid #9C9C9C;box-shadow:inset 1px 1px 0 #E0E0E0"></div>
<div class="t f" id="t68" style="left:274.03px;top:384px;font-size:12px;color:#000;--w:22.069px;transform:scaleX(0.97273);">SSL</div>
<div class="a" style="left:391px;top:383px;width:17px;height:16px;border:1px solid #98B0D8;border-radius:2px;background:linear-gradient(180deg,#E8F0FC 0,#C8D8F0 50%,#B8CCEA 100%)"></div>
<svg class="a" style="left:395px;top:388px" width="9" height="6" viewBox="0 0 9 6"><path d="M1 1l3.5 3.5L8 1" fill="none" stroke="#3C4658" stroke-width="2"/></svg>
<div class="a" style="left:251px;top:400px;width:372px;height:1px;background:#EEEEF0;"></div>
<div class="t f" id="t69" style="left:250.00px;top:403px;font-size:12px;color:#333;--w:11.818px;transform:scaleX(0.88462);">06</div>
<div class="a" style="left:272px;top:401px;width:137px;height:18px;background:#fff;border:1px solid #9C9C9C;box-shadow:inset 1px 1px 0 #E0E0E0"></div>
<div class="a" style="left:275px;top:409px;width:111px;height:1px;background:repeating-linear-gradient(90deg,#111 0,#111 5px,transparent 5px,transparent 7px);"></div>
<div class="a" style="left:391px;top:402px;width:17px;height:16px;border:1px solid #98B0D8;border-radius:2px;background:linear-gradient(180deg,#E8F0FC 0,#C8D8F0 50%,#B8CCEA 100%)"></div>
<svg class="a" style="left:395px;top:407px" width="9" height="6" viewBox="0 0 9 6"><path d="M1 1l3.5 3.5L8 1" fill="none" stroke="#3C4658" stroke-width="2"/></svg>
<div class="a" style="left:251px;top:419px;width:372px;height:1px;background:#EEEEF0;"></div>
<div class="t f" id="t70" style="left:250.00px;top:422px;font-size:12px;color:#333;--w:11.818px;transform:scaleX(0.88462);">07</div>
<div class="a" style="left:272px;top:420px;width:137px;height:18px;background:#fff;border:1px solid #9C9C9C;box-shadow:inset 1px 1px 0 #E0E0E0"></div>
<div class="a" style="left:275px;top:428px;width:111px;height:1px;background:repeating-linear-gradient(90deg,#111 0,#111 5px,transparent 5px,transparent 7px);"></div>
<div class="a" style="left:391px;top:421px;width:17px;height:16px;border:1px solid #98B0D8;border-radius:2px;background:linear-gradient(180deg,#E8F0FC 0,#C8D8F0 50%,#B8CCEA 100%)"></div>
<svg class="a" style="left:395px;top:426px" width="9" height="6" viewBox="0 0 9 6"><path d="M1 1l3.5 3.5L8 1" fill="none" stroke="#3C4658" stroke-width="2"/></svg>
<div class="a" style="left:251px;top:438px;width:372px;height:1px;background:#EEEEF0;"></div>
<div class="t f" id="t71" style="left:250.00px;top:441px;font-size:12px;color:#333;--w:11.818px;transform:scaleX(0.88462);">08</div>
<div class="a" style="left:272px;top:439px;width:137px;height:18px;background:#fff;border:1px solid #9C9C9C;box-shadow:inset 1px 1px 0 #E0E0E0"></div>
<div class="a" style="left:275px;top:447px;width:111px;height:1px;background:repeating-linear-gradient(90deg,#111 0,#111 5px,transparent 5px,transparent 7px);"></div>
<div class="a" style="left:391px;top:440px;width:17px;height:16px;border:1px solid #98B0D8;border-radius:2px;background:linear-gradient(180deg,#E8F0FC 0,#C8D8F0 50%,#B8CCEA 100%)"></div>
<svg class="a" style="left:395px;top:445px" width="9" height="6" viewBox="0 0 9 6"><path d="M1 1l3.5 3.5L8 1" fill="none" stroke="#3C4658" stroke-width="2"/></svg>
<div class="a" style="left:251px;top:457px;width:372px;height:1px;background:#EEEEF0;"></div>
<div class="t f" id="t72" style="left:250.00px;top:460px;font-size:12px;color:#333;--w:11.818px;transform:scaleX(0.88462);">09</div>
<div class="a" style="left:272px;top:458px;width:137px;height:18px;background:#fff;border:1px solid #9C9C9C;box-shadow:inset 1px 1px 0 #E0E0E0"></div>
<div class="a" style="left:275px;top:466px;width:111px;height:1px;background:repeating-linear-gradient(90deg,#111 0,#111 5px,transparent 5px,transparent 7px);"></div>
<div class="a" style="left:391px;top:459px;width:17px;height:16px;border:1px solid #98B0D8;border-radius:2px;background:linear-gradient(180deg,#E8F0FC 0,#C8D8F0 50%,#B8CCEA 100%)"></div>
<svg class="a" style="left:395px;top:464px" width="9" height="6" viewBox="0 0 9 6"><path d="M1 1l3.5 3.5L8 1" fill="none" stroke="#3C4658" stroke-width="2"/></svg>
<div class="a" style="left:251px;top:476px;width:372px;height:1px;background:#EEEEF0;"></div>
<div class="t f" id="t73" style="left:249.04px;top:479px;font-size:12px;color:#333;--w:12.803px;transform:scaleX(0.95833);">10</div>
<div class="a" style="left:272px;top:477px;width:137px;height:18px;background:#fff;border:1px solid #9C9C9C;box-shadow:inset 1px 1px 0 #E0E0E0"></div>
<div class="a" style="left:275px;top:485px;width:111px;height:1px;background:repeating-linear-gradient(90deg,#111 0,#111 5px,transparent 5px,transparent 7px);"></div>
<div class="a" style="left:391px;top:478px;width:17px;height:16px;border:1px solid #98B0D8;border-radius:2px;background:linear-gradient(180deg,#E8F0FC 0,#C8D8F0 50%,#B8CCEA 100%)"></div>
<svg class="a" style="left:395px;top:483px" width="9" height="6" viewBox="0 0 9 6"><path d="M1 1l3.5 3.5L8 1" fill="none" stroke="#3C4658" stroke-width="2"/></svg>
<div class="a" style="left:624px;top:286px;width:374px;height:210px;background:transparent;border:1px solid #555"></div>
<div class="a" style="left:645px;top:287px;width:1px;height:208px;background:#EEEEF0;"></div>
<div class="t f" id="t74" style="left:647.00px;top:289px;font-size:12px;color:#333;--w:98.916px;transform:scaleX(0.91589);">右サイドコンテンツ</div>
<div class="a" style="left:625px;top:305px;width:372px;height:1px;background:#EEEEF0;"></div>
<div class="t f" id="t75" style="left:624.00px;top:308px;font-size:12px;color:#333;--w:11.818px;transform:scaleX(0.88462);">01</div>
<div class="a" style="left:646px;top:306px;width:137px;height:18px;background:#fff;border:1px solid #9C9C9C;box-shadow:inset 1px 1px 0 #E0E0E0"></div>
<div class="t f" id="t76" style="left:648.18px;top:308px;font-size:12px;color:#000;--w:49.119px;transform:scaleX(0.81864);">ランキング</div>
<div class="a" style="left:765px;top:307px;width:17px;height:16px;border:1px solid #98B0D8;border-radius:2px;background:linear-gradient(180deg,#E8F0FC 0,#C8D8F0 50%,#B8CCEA 100%)"></div>
<svg class="a" style="left:769px;top:312px" width="9" height="6" viewBox="0 0 9 6"><path d="M1 1l3.5 3.5L8 1" fill="none" stroke="#3C4658" stroke-width="2"/></svg>
<div class="a" style="left:625px;top:324px;width:372px;height:1px;background:#EEEEF0;"></div>
<div class="t f" id="t77" style="left:624.00px;top:327px;font-size:12px;color:#333;--w:11.818px;transform:scaleX(0.88462);">02</div>
<div class="a" style="left:646px;top:325px;width:137px;height:18px;background:#fff;border:1px solid #9C9C9C;box-shadow:inset 1px 1px 0 #E0E0E0"></div>
<div class="t f" id="t78" style="left:647.97px;top:327px;font-size:12px;color:#000;--w:61.525px;transform:scaleX(1.02542);">お勧め商品</div>
<div class="a" style="left:765px;top:326px;width:17px;height:16px;border:1px solid #98B0D8;border-radius:2px;background:linear-gradient(180deg,#E8F0FC 0,#C8D8F0 50%,#B8CCEA 100%)"></div>
<svg class="a" style="left:769px;top:331px" width="9" height="6" viewBox="0 0 9 6"><path d="M1 1l3.5 3.5L8 1" fill="none" stroke="#3C4658" stroke-width="2"/></svg>
<div class="a" style="left:625px;top:343px;width:372px;height:1px;background:#EEEEF0;"></div>
<div class="t f" id="t79" style="left:624.00px;top:346px;font-size:12px;color:#333;--w:11.818px;transform:scaleX(0.88462);">03</div>
<div class="a" style="left:646px;top:344px;width:137px;height:18px;background:#fff;border:1px solid #9C9C9C;box-shadow:inset 1px 1px 0 #E0E0E0"></div>
<div class="a" style="left:649px;top:352px;width:111px;height:1px;background:repeating-linear-gradient(90deg,#111 0,#111 5px,transparent 5px,transparent 7px);"></div>
<div class="a" style="left:765px;top:345px;width:17px;height:16px;border:1px solid #98B0D8;border-radius:2px;background:linear-gradient(180deg,#E8F0FC 0,#C8D8F0 50%,#B8CCEA 100%)"></div>
<svg class="a" style="left:769px;top:350px" width="9" height="6" viewBox="0 0 9 6"><path d="M1 1l3.5 3.5L8 1" fill="none" stroke="#3C4658" stroke-width="2"/></svg>
<div class="a" style="left:625px;top:362px;width:372px;height:1px;background:#EEEEF0;"></div>
<div class="t f" id="t80" style="left:624.00px;top:365px;font-size:12px;color:#333;--w:11.818px;transform:scaleX(0.88462);">04</div>
<div class="a" style="left:646px;top:363px;width:137px;height:18px;background:#fff;border:1px solid #9C9C9C;box-shadow:inset 1px 1px 0 #E0E0E0"></div>
<div class="a" style="left:649px;top:371px;width:111px;height:1px;background:repeating-linear-gradient(90deg,#111 0,#111 5px,transparent 5px,transparent 7px);"></div>
<div class="a" style="left:765px;top:364px;width:17px;height:16px;border:1px solid #98B0D8;border-radius:2px;background:linear-gradient(180deg,#E8F0FC 0,#C8D8F0 50%,#B8CCEA 100%)"></div>
<svg class="a" style="left:769px;top:369px" width="9" height="6" viewBox="0 0 9 6"><path d="M1 1l3.5 3.5L8 1" fill="none" stroke="#3C4658" stroke-width="2"/></svg>
<div class="a" style="left:625px;top:381px;width:372px;height:1px;background:#EEEEF0;"></div>
<div class="t f" id="t81" style="left:624.00px;top:384px;font-size:12px;color:#333;--w:11.818px;transform:scaleX(0.88462);">05</div>
<div class="a" style="left:646px;top:382px;width:137px;height:18px;background:#fff;border:1px solid #9C9C9C;box-shadow:inset 1px 1px 0 #E0E0E0"></div>
<div class="a" style="left:649px;top:390px;width:111px;height:1px;background:repeating-linear-gradient(90deg,#111 0,#111 5px,transparent 5px,transparent 7px);"></div>
<div class="a" style="left:765px;top:383px;width:17px;height:16px;border:1px solid #98B0D8;border-radius:2px;background:linear-gradient(180deg,#E8F0FC 0,#C8D8F0 50%,#B8CCEA 100%)"></div>
<svg class="a" style="left:769px;top:388px" width="9" height="6" viewBox="0 0 9 6"><path d="M1 1l3.5 3.5L8 1" fill="none" stroke="#3C4658" stroke-width="2"/></svg>
<div class="a" style="left:625px;top:400px;width:372px;height:1px;background:#EEEEF0;"></div>
<div class="t f" id="t82" style="left:624.00px;top:403px;font-size:12px;color:#333;--w:11.818px;transform:scaleX(0.88462);">06</div>
<div class="a" style="left:646px;top:401px;width:137px;height:18px;background:#fff;border:1px solid #9C9C9C;box-shadow:inset 1px 1px 0 #E0E0E0"></div>
<div class="a" style="left:649px;top:409px;width:111px;height:1px;background:repeating-linear-gradient(90deg,#111 0,#111 5px,transparent 5px,transparent 7px);"></div>
<div class="a" style="left:765px;top:402px;width:17px;height:16px;border:1px solid #98B0D8;border-radius:2px;background:linear-gradient(180deg,#E8F0FC 0,#C8D8F0 50%,#B8CCEA 100%)"></div>
<svg class="a" style="left:769px;top:407px" width="9" height="6" viewBox="0 0 9 6"><path d="M1 1l3.5 3.5L8 1" fill="none" stroke="#3C4658" stroke-width="2"/></svg>
<div class="a" style="left:625px;top:419px;width:372px;height:1px;background:#EEEEF0;"></div>
<div class="t f" id="t83" style="left:624.00px;top:422px;font-size:12px;color:#333;--w:11.818px;transform:scaleX(0.88462);">07</div>
<div class="a" style="left:646px;top:420px;width:137px;height:18px;background:#fff;border:1px solid #9C9C9C;box-shadow:inset 1px 1px 0 #E0E0E0"></div>
<div class="a" style="left:649px;top:428px;width:111px;height:1px;background:repeating-linear-gradient(90deg,#111 0,#111 5px,transparent 5px,transparent 7px);"></div>
<div class="a" style="left:765px;top:421px;width:17px;height:16px;border:1px solid #98B0D8;border-radius:2px;background:linear-gradient(180deg,#E8F0FC 0,#C8D8F0 50%,#B8CCEA 100%)"></div>
<svg class="a" style="left:769px;top:426px" width="9" height="6" viewBox="0 0 9 6"><path d="M1 1l3.5 3.5L8 1" fill="none" stroke="#3C4658" stroke-width="2"/></svg>
<div class="a" style="left:625px;top:438px;width:372px;height:1px;background:#EEEEF0;"></div>
<div class="t f" id="t84" style="left:624.00px;top:441px;font-size:12px;color:#333;--w:11.818px;transform:scaleX(0.88462);">08</div>
<div class="a" style="left:646px;top:439px;width:137px;height:18px;background:#fff;border:1px solid #9C9C9C;box-shadow:inset 1px 1px 0 #E0E0E0"></div>
<div class="a" style="left:649px;top:447px;width:111px;height:1px;background:repeating-linear-gradient(90deg,#111 0,#111 5px,transparent 5px,transparent 7px);"></div>
<div class="a" style="left:765px;top:440px;width:17px;height:16px;border:1px solid #98B0D8;border-radius:2px;background:linear-gradient(180deg,#E8F0FC 0,#C8D8F0 50%,#B8CCEA 100%)"></div>
<svg class="a" style="left:769px;top:445px" width="9" height="6" viewBox="0 0 9 6"><path d="M1 1l3.5 3.5L8 1" fill="none" stroke="#3C4658" stroke-width="2"/></svg>
<div class="a" style="left:625px;top:457px;width:372px;height:1px;background:#EEEEF0;"></div>
<div class="t f" id="t85" style="left:624.00px;top:460px;font-size:12px;color:#333;--w:11.818px;transform:scaleX(0.88462);">09</div>
<div class="a" style="left:646px;top:458px;width:137px;height:18px;background:#fff;border:1px solid #9C9C9C;box-shadow:inset 1px 1px 0 #E0E0E0"></div>
<div class="a" style="left:649px;top:466px;width:111px;height:1px;background:repeating-linear-gradient(90deg,#111 0,#111 5px,transparent 5px,transparent 7px);"></div>
<div class="a" style="left:765px;top:459px;width:17px;height:16px;border:1px solid #98B0D8;border-radius:2px;background:linear-gradient(180deg,#E8F0FC 0,#C8D8F0 50%,#B8CCEA 100%)"></div>
<svg class="a" style="left:769px;top:464px" width="9" height="6" viewBox="0 0 9 6"><path d="M1 1l3.5 3.5L8 1" fill="none" stroke="#3C4658" stroke-width="2"/></svg>
<div class="a" style="left:625px;top:476px;width:372px;height:1px;background:#EEEEF0;"></div>
<div class="t f" id="t86" style="left:623.04px;top:479px;font-size:12px;color:#333;--w:12.803px;transform:scaleX(0.95833);">10</div>
<div class="a" style="left:646px;top:477px;width:137px;height:18px;background:#fff;border:1px solid #9C9C9C;box-shadow:inset 1px 1px 0 #E0E0E0"></div>
<div class="a" style="left:649px;top:485px;width:111px;height:1px;background:repeating-linear-gradient(90deg,#111 0,#111 5px,transparent 5px,transparent 7px);"></div>
<div class="a" style="left:765px;top:478px;width:17px;height:16px;border:1px solid #98B0D8;border-radius:2px;background:linear-gradient(180deg,#E8F0FC 0,#C8D8F0 50%,#B8CCEA 100%)"></div>
<svg class="a" style="left:769px;top:483px" width="9" height="6" viewBox="0 0 9 6"><path d="M1 1l3.5 3.5L8 1" fill="none" stroke="#3C4658" stroke-width="2"/></svg>
<div class="a" style="left:601px;top:497px;width:46px;height:20px;border:1px solid #1C4478;border-radius:3px;background:linear-gradient(180deg,#FFFFFF 0,#F4F4F0 35%,#C8D8EC 55%,#A8BCD8 100%)"></div>
<div class="t f" id="t87" style="left:612.00px;top:500px;font-size:13px;color:#000;--w:24.000px;transform:scaleX(0.92308);">登録</div>
<div class="a" style="left:583px;top:820px;width:1px;height:20px;background:#D4D0C8;"></div>
<div class="a" style="left:607px;top:820px;width:1px;height:20px;background:#D4D0C8;"></div>
<div class="a" style="left:632px;top:820px;width:1px;height:20px;background:#D4D0C8;"></div>
<div class="a" style="left:656px;top:820px;width:1px;height:20px;background:#D4D0C8;"></div>
<div class="a" style="left:680px;top:820px;width:1px;height:20px;background:#D4D0C8;"></div>
<div class="a" style="left:704px;top:820px;width:1px;height:20px;background:#D4D0C8;"></div>
<div class="a" style="left:728px;top:820px;width:1px;height:20px;background:#D4D0C8;"></div>
<div class="a" style="left:905px;top:820px;width:1px;height:20px;background:#D4D0C8;"></div>
<div class="a" style="left:947px;top:820px;width:1px;height:20px;background:#D4D0C8;"></div>
<svg class="a" style="left:732px;top:823px" width="16" height="16" viewBox="0 0 16 16"><defs><radialGradient id="gl" cx=".4" cy=".35" r=".7"><stop offset="0" stop-color="#7CD4FA"/><stop offset=".6" stop-color="#2A7AD8"/><stop offset="1" stop-color="#143C9C"/></radialGradient></defs><circle cx="8" cy="8" r="7.3" fill="url(#gl)"/><path d="M2.5 9.5c1.5-.5 3 .5 3.5 1.8.4 1.2 2.2 1.2 2.5 2.5L7 15c-2.4-.3-4.2-2.2-4.5-5.5zM11.5 5c1.6.3 2.6 1.6 2.8 3.4-.6 1.8-1.6 3-2.8 3.6-.2-1.6.4-2.8-.6-4.2-.5-.9.1-2.3.6-2.8z" fill="#3CB43C"/><circle cx="5.4" cy="4.6" r="1.6" fill="#E8F8FF"/></svg>
<div class="t f" id="t88" style="left:751.23px;top:824px;font-size:12px;color:#000;--w:65.100px;transform:scaleX(0.77500);">インターネット</div>
<svg class="a" style="left:916px;top:822px" width="18" height="16" viewBox="0 0 18 16"><path d="M1 8a6 6 0 0 1 12-2" fill="none" stroke="#9098A8" stroke-width="1.5"/><rect x="7" y="8" width="8" height="7" fill="#A8A8B0"/><path d="M9 8V6a2 2 0 0 1 4 0v2" fill="none" stroke="#909098" stroke-width="1.3"/></svg>
<svg class="a" style="left:937px;top:830px" width="7" height="4" viewBox="0 0 7 4"><path d="M0 0h7L3.5 4z" fill="#222"/></svg>
<svg class="a" style="left:958px;top:822px" width="16" height="16" viewBox="0 0 16 16"><circle cx="6" cy="6" r="4.5" fill="#fff" stroke="#8890A0" stroke-width="1.2"/><path d="M3.5 6h5M6 3.5v5" stroke="#1060D0" stroke-width="2"/><path d="M9 9l5 5" stroke="#A06030" stroke-width="2.2"/></svg>
<div class="t f" id="t89" style="left:972.15px;top:824px;font-size:12px;color:#000;--w:25.995px;transform:scaleX(0.84667);">100%</div>
<svg class="a" style="left:1010px;top:829px" width="7" height="4" viewBox="0 0 7 4"><path d="M0 0h7L3.5 4z" fill="#222"/></svg>
<div class="a" style="left:1037px;top:830px;width:2px;height:2px;background:#C0C0C0;"></div>
<div class="a" style="left:1033px;top:834px;width:2px;height:2px;background:#C0C0C0;"></div>
<div class="a" style="left:1037px;top:834px;width:2px;height:2px;background:#C0C0C0;"></div>
<div class="a" style="left:1029px;top:838px;width:2px;height:2px;background:#C0C0C0;"></div>
<div class="a" style="left:1033px;top:838px;width:2px;height:2px;background:#C0C0C0;"></div>
<div class="a" style="left:1037px;top:838px;width:2px;height:2px;background:#C0C0C0;"></div>
<script>
(function(){var L=document.querySelectorAll('.f');for(var i=0;i<L.length;i++){var e=L[i];var w=parseFloat(e.style.getPropertyValue('--w'));if(!w)continue;e.style.transform='none';var n=e.getBoundingClientRect().width;e.style.transform=n>0?'scaleX('+(w/n)+')':'';}})();
</script>
</body></html>
